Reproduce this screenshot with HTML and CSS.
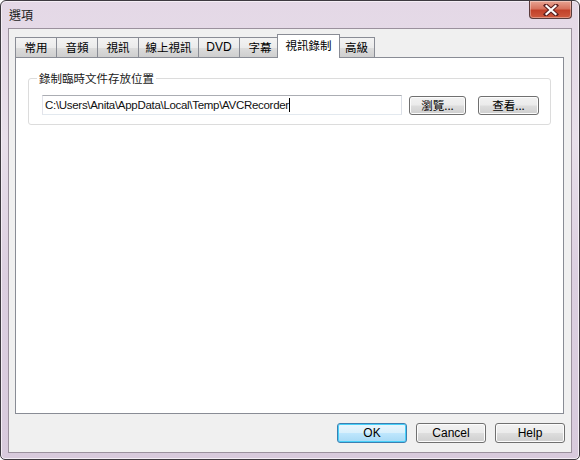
FILE: index.html
```html
<!DOCTYPE html>
<html>
<head>
<meta charset="utf-8">
<link rel="stylesheet" href="styles.css">
</head>
<body>
<div class="window">
  <div class="titlebar">
    <span class="title">選項</span>
    <div class="close">
      <svg width="16" height="12" viewBox="0 0 16 12">
        <path d="M3 1.5 L13 10.5 M13 1.5 L3 10.5" stroke="#5a2020" stroke-width="4.2" stroke-linecap="square" fill="none"/>
        <path d="M3.5 2 L12.5 10 M12.5 2 L3.5 10" stroke="#ffffff" stroke-width="2.2" stroke-linecap="square" fill="none"/>
      </svg>
    </div>
  </div>
  <div class="client">
    <div class="tabs">
      <div class="tab w2">常用</div>
      <div class="tab w2">音頻</div>
      <div class="tab w2">視訊</div>
      <div class="tab w4">線上視訊</div>
      <div class="tab w2 latin">DVD</div>
      <div class="tab w2">字幕</div>
      <div class="tab w4 active">視訊錄制</div>
      <div class="tab w2s">高級</div>
    </div>
    <div class="panel">
      <fieldset class="group">
        <legend>錄制臨時文件存放位置</legend>
        <div class="row">
          <div class="input"><span>C:\Users\Anita\AppData\Local\Temp\AVCRecorder</span><span class="caret"></span></div>
          <button class="btn browse">瀏覽...</button>
          <button class="btn view">查看...</button>
        </div>
      </fieldset>
    </div>
    <div class="actions">
      <button class="btn big default">OK</button>
      <button class="btn big">Cancel</button>
      <button class="btn big">Help</button>
    </div>
  </div>
</div>
</body>
</html>
```
FILE: styles.css
```css
html, body {
  margin: 0;
  padding: 0;
  width: 580px;
  height: 460px;
  overflow: hidden;
  background: #ffffff;
}
body {
  font-family: "Liberation Sans", "Noto Sans CJK TC", sans-serif;
  font-size: 12px;
  color: #000;
}
.window {
  box-sizing: border-box;
  width: 580px;
  height: 460px;
  border: 1px solid #3e3a40;
  border-radius: 6px 6px 5px 5px;
  background: linear-gradient(180deg, #e4d8e6 0%, #e8dfea 30%, #dccfe0 60%, #d8cadc 100%);
  display: flex;
  flex-direction: column;
  padding: 0 7px 6px 7px;
  box-shadow: inset 0 0 0 1px #f4eef5;
}
.titlebar {
  height: 27px;
  display: flex;
  justify-content: space-between;
  align-items: flex-start;
  flex: none;
}
.title {
  font-family: "Noto Sans CJK TC", sans-serif;
  font-size: 12px;
  line-height: 16px;
  margin-top: 6px;
  margin-left: 1px;
  color: #1a1a1a;
}
.close {
  width: 43px;
  height: 18px;
  box-sizing: border-box;
  border: 1px solid #5a3b3b;
  border-top: none;
  border-radius: 0 0 4px 4px;
  background: linear-gradient(180deg, #e8a493 0%, #d6735e 45%, #c2412a 55%, #cf5a3f 100%);
  display: flex;
  align-items: center;
  justify-content: center;
  box-shadow: inset 0 0 0 1px rgba(255,255,255,0.35);
}
.client {
  flex: 1;
  box-sizing: border-box;
  background: #f0f0f0;
  border: 1px solid #9b919d;
  display: flex;
  flex-direction: column;
  padding: 5px 7px 8px 6px;
}
.tabs {
  display: flex;
  align-items: flex-end;
  height: 23px;
  flex: none;
}
.tab {
  box-sizing: border-box;
  height: 20px;
  border: 1px solid #898c95;
  border-bottom: none;
  margin-right: -1px;
  background: linear-gradient(180deg, #f3f3f3 0%, #ebebeb 50%, #dddddd 51%, #cfcfcf 100%);
  font-family: "Noto Sans CJK TC", sans-serif;
  font-size: 11.5px;
  line-height: 18px;
  text-align: center;
  color: #000;
}
.tab.latin {
  font-family: "Liberation Sans", sans-serif;
  font-size: 12px;
}
.w2 { width: 42px; }
.w4 { width: 61px; }
.w2s { width: 37px; }
.tab.active {
  height: 24px;
  width: 63px;
  margin: 0 -2px -1px -3px;
  background: #ffffff;
  position: relative;
  z-index: 1;
  line-height: 20px;
}
.panel {
  box-sizing: border-box;
  height: 357px;
  background: #ffffff;
  border: 1px solid #898c95;
  padding: 12px 12px 0 12px;
  flex: none;
}
.group {
  margin: 0;
  width: 523px;
  box-sizing: border-box;
  border: 1px solid #dcdcdc;
  border-radius: 3px;
  padding: 9px 10px 9px 13px;
  box-shadow: inset 1px 1px 0 #ffffff;
}
.group legend {
  font-family: "Noto Sans CJK TC", sans-serif;
  font-size: 11.5px;
  line-height: 16px;
  padding: 0 2px;
  margin-left: -5px;
  color: #1a1a1a;
}
.row {
  display: flex;
  align-items: center;
}
.input {
  box-sizing: border-box;
  width: 360px;
  height: 20px;
  border: 1px solid #abadb3;
  border-color: #abadb3 #dbdfe6 #e3e9ef #e2e3ea;
  background: #fff;
  padding: 0 2px;
  display: flex;
  align-items: center;
  font-family: "Liberation Sans", sans-serif;
  font-size: 11.5px;
  letter-spacing: -0.3px;
  color: #111;
  white-space: nowrap;
}
.caret {
  display: inline-block;
  width: 1px;
  height: 14px;
  background: #000;
  margin-left: 0;
}
.btn {
  box-sizing: border-box;
  height: 19px;
  border: 1px solid #707070;
  border-radius: 3px;
  background: linear-gradient(180deg, #f2f2f2 0%, #ebebeb 48%, #dddddd 52%, #cfcfcf 100%);
  box-shadow: inset 0 0 0 1px #fcfcfc;
  font-family: "Noto Sans CJK TC", sans-serif;
  font-size: 11.5px;
  line-height: 15px;
  padding: 0;
  color: #000;
  margin: 0;
}
.browse { width: 57px; margin-left: 7px; }
.view { width: 61px; margin-left: 12px; }
.actions {
  display: flex;
  justify-content: flex-end;
  margin-top: 9px;
  margin-right: -1px;
  gap: 9px;
}
.btn.big {
  width: 70px;
  height: 20px;
  font-family: "Liberation Sans", sans-serif;
  font-size: 12px;
  line-height: 17px;
}
.btn.default {
  border-color: #3c7fb1;
  background: linear-gradient(180deg, #eaf6fd 0%, #d9f0fc 48%, #bee6fd 52%, #a7d9f5 100%);
  box-shadow: inset 0 0 0 1px #48d0f9;
}
```
